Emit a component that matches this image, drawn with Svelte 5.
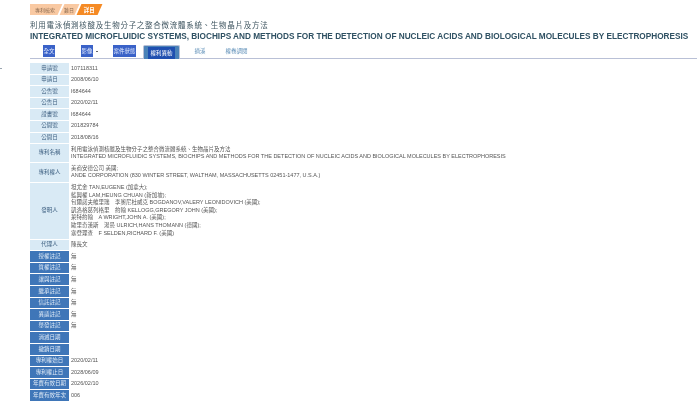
<script>
	const crumbs = [
		{ label: '專利檢索', cls: 'crumb crumb--first' },
		{ label: '難日', cls: 'crumb crumb--mid' },
		{ label: '詳目', cls: 'crumb crumb--on' }
	];

	const tabs = [
		{ label: '全文', cls: 'tab tab--link', w: 12, gap: 26 },
		{ label: '影像', cls: 'tab tab--link tab--more', w: 12, gap: 20 },
		{ label: '案件狀態', cls: 'tab tab--link', w: 23, gap: 7 },
		{ label: '權利異動', cls: 'tab tab--on', w: 37, gap: 14 },
		{ label: '摘溪', cls: 'tab tab--plain', w: 12, gap: 19 },
		{ label: '權卷調閱', cls: 'tab tab--plain', w: 23, gap: 0 }
	];

	const rows = [
		{ k: '申請號', v: ['107118311'] },
		{ k: '申請日', v: ['2008/06/10'] },
		{ k: '公告號', v: ['I684644'] },
		{ k: '公告日', v: ['2020/02/11'] },
		{ k: '證書號', v: ['I684644'] },
		{ k: '公開號', v: ['201829784'] },
		{ k: '公開日', v: ['2018/08/16'] },
		{
			k: '專利名稱',
			v: [
				'利用電泳偵測核酸及生物分子之整合微流體系統、生物晶片及方法',
				'INTEGRATED MICROFLUIDIC SYSTEMS, BIOCHIPS AND METHODS FOR THE DETECTION OF NUCLEIC ACIDS AND BIOLOGICAL MOLECULES BY ELECTROPHORESIS'
			]
		},
		{
			k: '專利權人',
			v: ['美商安德公司 美國;', 'ANDE CORPORATION (830 WINTER STREET, WALTHAM, MASSACHUSETTS 02451-1477, U.S.A.)']
		},
		{
			k: '發明人',
			v: [
				'坦尤金 TAN,EUGENE (加拿大);',
				'藍興權 LAM,HEUNG CHUAN (新加坡);',
				'包爾諾夫維里瑞　李奧尼杜威克 BOGDANOV,VALERY LEONIDOVICH (美國);',
				'凱洛格葛列格里　約翰 KELLOGG,GREGORY JOHN (美國);',
				'萊特約翰　A WRIGHT,JOHN A. (美國);',
				'歐里奇漢斯　湯曼 ULRICH,HANS THOMANN (德國);',
				'塞登理查　F SELDEN,RICHARD F. (美國)'
			]
		},
		{ k: '代理人', v: ['陳長文'] },
		{ k: '授權註記', v: ['無'], dark: true },
		{ k: '質權註記', v: ['無'], dark: true },
		{ k: '讓與註記', v: ['無'], dark: true },
		{ k: '繼承註記', v: ['無'], dark: true },
		{ k: '信託註記', v: ['無'], dark: true },
		{ k: '異議註記', v: ['無'], dark: true },
		{ k: '舉發註記', v: ['無'], dark: true },
		{ k: '消滅日期', v: [''], dark: true },
		{ k: '撤銷日期', v: [''], dark: true },
		{ k: '專利權始日', v: ['2020/02/11'], dark: true },
		{ k: '專利權止日', v: ['2028/06/09'], dark: true },
		{ k: '年費有效日期', v: ['2026/02/10'], dark: true },
		{ k: '年費有效年次', v: ['006'], dark: true }
	];
</script>

<div class="page">
	<span class="stray"></span>

	<nav class="crumbs">
		{#each crumbs as c}
			<span class={c.cls}><span class="crumb__text">{c.label}</span></span>
		{/each}
	</nav>

	<h1 class="title">利用電泳偵測核酸及生物分子之整合微流體系統、生物晶片及方法</h1>
	<h2 class="title-en">INTEGRATED MICROFLUIDIC SYSTEMS, BIOCHIPS AND METHODS FOR THE DETECTION OF NUCLEIC ACIDS AND BIOLOGICAL MOLECULES BY ELECTROPHORESIS</h2>

	<div class="tabs">
		{#each tabs as t}
			<div class={t.cls} style="width: {t.w}px; margin-right: {t.gap}px"><span>{t.label}</span></div>
		{/each}
	</div>

	<div class="table">
		{#each rows as r}
			<div class="row">
				<div class="key" class:key--dark={r.dark}>{r.k}</div>
				<div class="val">
					{#each r.v as line}
						<div class="line">{line}</div>
					{/each}
				</div>
			</div>
		{/each}
	</div>
</div>

<style>
	:global(body) {
		margin: 0;
		background: #fff;
	}

	.page {
		position: relative;
		width: 697px;
		height: 405px;
		box-sizing: border-box;
		padding: 4px 0 0 30px;
		overflow: hidden;
		font-family: 'Liberation Sans', 'Noto Sans CJK TC', sans-serif;
		filter: blur(0.4px);
	}

	.stray {
		position: absolute;
		left: 0;
		top: 68px;
		width: 2px;
		height: 1px;
		background: #9aa5b0;
	}

	.crumbs {
		display: flex;
		gap: 2px;
		height: 11px;
		overflow: hidden;
	}

	.crumb {
		display: flex;
		align-items: center;
		justify-content: center;
		box-sizing: border-box;
		height: 11px;
		background: #f9c9a2;
		transform: skewX(-24deg);
		font-size: 5px;
		color: #8a6a50;
	}

	.crumb--first {
		width: 33px;
		margin-left: -3px;
		padding-left: 3px;
	}

	.crumb--mid {
		width: 15px;
	}

	.crumb--on {
		width: 21px;
		background: #f58a24;
		color: #fff;
		font-weight: bold;
		font-size: 5.5px;
	}

	.crumb__text {
		display: block;
		transform: skewX(24deg);
		white-space: nowrap;
	}

	.title {
		margin: 6px 0 0;
		font-size: 7.5px;
		line-height: 9px;
		font-weight: normal;
		letter-spacing: 0.72px;
		color: #3f5560;
		white-space: nowrap;
	}

	.title-en {
		margin: 2px 0 0;
		font-size: 8.24px;
		line-height: 9px;
		font-weight: bold;
		color: #2f5163;
		white-space: nowrap;
	}

	.tabs {
		display: flex;
		align-items: flex-end;
		height: 13px;
		margin-top: 4px;
		border-bottom: 1px solid #b9c0d6;
		padding-left: 13px;
	}

	.tab {
		display: flex;
		align-items: center;
		justify-content: center;
		box-sizing: border-box;
		height: 13px;
		font-size: 5.5px;
		white-space: nowrap;
	}

	.tab--link {
		height: 12px;
		margin-bottom: 1px;
		background: #3a62c8;
		color: #e4ecff;
	}

	.tab--more {
		position: relative;
	}

	.tab--more::after {
		position: absolute;
		left: 15px;
		top: 6px;
		width: 2px;
		height: 1px;
		background: #666;
		content: '';
	}

	.tab--on {
		height: 14px;
		padding-top: 1px;
		margin-bottom: -1px;
		background: #4a82b8;
		border: 1px solid #b9c0d6;
		border-bottom: 0;
		border-radius: 2px 2px 0 0;
		color: #fff;
	}

	.tab--on span {
		padding: 2px 2px;
		background: #1f4fb0;
	}

	.tab--plain {
		margin-bottom: 1px;
		color: #5e8fb8;
	}

	.table {
		display: flex;
		flex-direction: column;
		margin-top: 4px;
		width: 660px;
	}

	.row {
		display: flex;
		min-height: 11.6px;
		font-size: 5.5px;
		line-height: 7.6px;
	}

	.key {
		display: flex;
		flex: 0 0 39px;
		align-items: center;
		justify-content: center;
		box-sizing: border-box;
		margin-bottom: 1px;
		background: #d9eaf5;
		color: #3d5f80;
		white-space: nowrap;
	}

	.key--dark {
		background: #3f76b8;
		color: #dfeaf6;
	}

	.val {
		flex: 1;
		align-self: center;
		padding: 1.5px 0 2.5px 2px;
		color: #555;
		white-space: nowrap;
	}

	.line {
		min-height: 7.6px;
	}
</style>
